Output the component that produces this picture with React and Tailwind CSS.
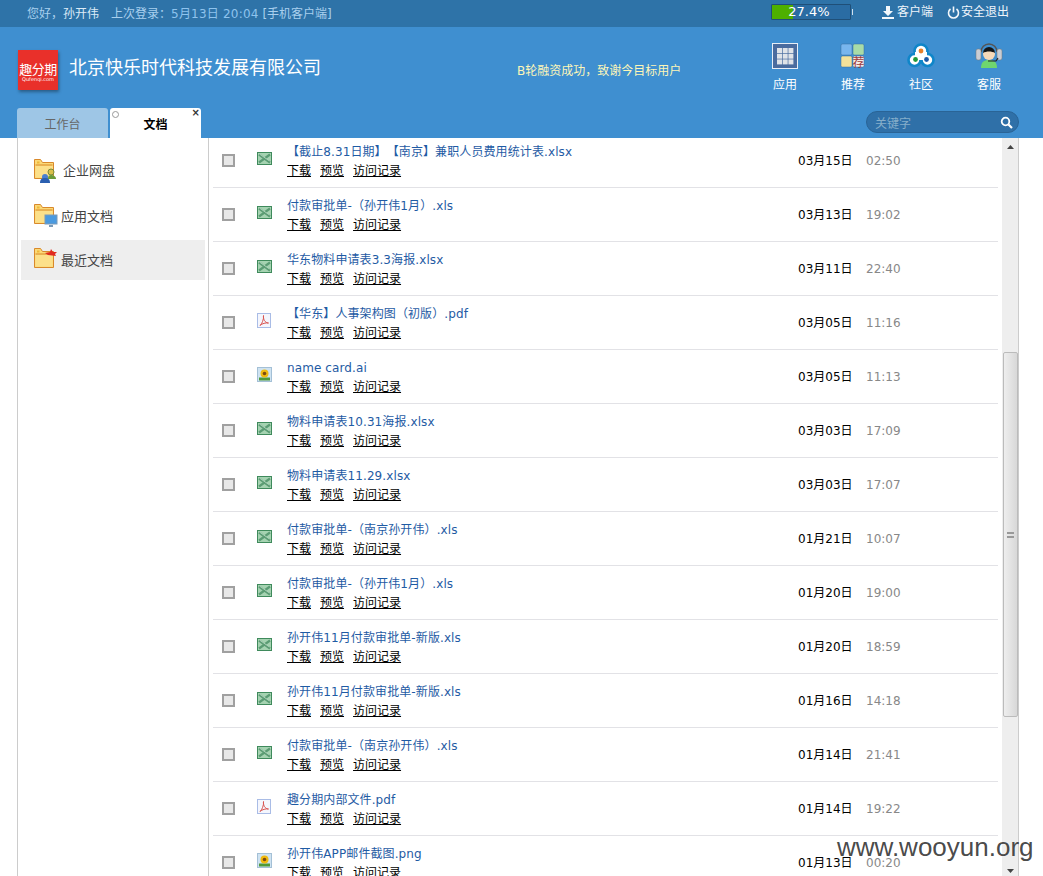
import React from "react";

const FONT = "font-['DejaVu_Sans','Noto_Sans_CJK_SC',sans-serif]";

const files = [
  { name: "【截止8.31日期】【南京】兼职人员费用统计表.xlsx", type: "xls", date: "03月15日", time: "02:50" },
  { name: "付款审批单-（孙开伟1月）.xls", type: "xls", date: "03月13日", time: "19:02" },
  { name: "华东物料申请表3.3海报.xlsx", type: "xls", date: "03月11日", time: "22:40" },
  { name: "【华东】人事架构图（初版）.pdf", type: "pdf", date: "03月05日", time: "11:16" },
  { name: "name card.ai", type: "img", date: "03月05日", time: "11:13" },
  { name: "物料申请表10.31海报.xlsx", type: "xls", date: "03月03日", time: "17:09" },
  { name: "物料申请表11.29.xlsx", type: "xls", date: "03月03日", time: "17:07" },
  { name: "付款审批单-（南京孙开伟）.xls", type: "xls", date: "01月21日", time: "10:07" },
  { name: "付款审批单-（孙开伟1月）.xls", type: "xls", date: "01月20日", time: "19:00" },
  { name: "孙开伟11月付款审批单-新版.xls", type: "xls", date: "01月20日", time: "18:59" },
  { name: "孙开伟11月付款审批单-新版.xls", type: "xls", date: "01月16日", time: "14:18" },
  { name: "付款审批单-（南京孙开伟）.xls", type: "xls", date: "01月14日", time: "21:41" },
  { name: "趣分期内部文件.pdf", type: "pdf", date: "01月14日", time: "19:22" },
  { name: "孙开伟APP邮件截图.png", type: "img", date: "01月13日", time: "00:20" },
];

function FileIcon({ type }) {
  if (type === "xls") {
    return (
      <svg width="15" height="15" viewBox="0 0 15 15" className="block">
        <rect x="0.5" y="1.5" width="14" height="12" fill="#a5d3b1" stroke="#3f8a5c" />
        <path d="M2 3.500l11 8M13 3.500l-11 8" stroke="#5b9c74" strokeWidth="2.200" />
        <path d="M2.500 3l10 7" stroke="#e2f2e6" strokeWidth="0.600" />
      </svg>
    );
  }
  if (type === "pdf") {
    return (
      <svg width="15" height="15" viewBox="0 0 15 15" className="block">
        <rect x="0.5" y="0.5" width="13" height="14" fill="#f4f6fd" stroke="#a9bce6" />
        <path d="M3 12.500C5 11 7 6 6.500 2.500 6 6 8 10 11.500 10 9 9.500 5 10.500 3 12.500z" fill="none" stroke="#d9534f" strokeWidth="1" />
      </svg>
    );
  }
  return (
    <svg width="15" height="15" viewBox="0 0 15 15" className="block">
      <rect x="0.5" y="0.5" width="14" height="14" fill="#cfe3f2" stroke="#a4c0d6" />
      <rect x="2" y="10.500" width="11" height="3" fill="#4f9a3a" />
      <circle cx="7.500" cy="6.500" r="4" fill="#f0b90f" />
      <circle cx="7.500" cy="6.500" r="1.800" fill="#7a4a10" />
    </svg>
  );
}

function FolderIcon({ children }) {
  return (
    <svg width="24" height="24" viewBox="0 0 24 24">
      <path d="M0.500 0.500h6l2 3h11v16h-19z" fill="#fbd977" stroke="#d9892b" />
      <path d="M1.500 7h17v11.500h-17z" fill="#fce08a" />
      <path d="M1.500 6h17" stroke="#d9892b" strokeWidth="1" />
      <rect x="3" y="2.500" width="2.500" height="2" fill="#f0b93a" />
      {children}
    </svg>
  );
}

function AppsIcon() {
  return (
    <svg width="26" height="26" viewBox="0 0 26 26">
      <rect x="0.500" y="0.500" width="25" height="25" fill="#4a6c9f" stroke="#e8eef6" />
      <g fill="#dfe3e8">
        <rect x="5" y="5" width="5" height="5" />
        <rect x="10.700" y="5" width="5" height="5" />
        <rect x="16.400" y="5" width="5" height="5" />
        <rect x="5" y="10.700" width="5" height="5" />
        <rect x="10.700" y="10.700" width="5" height="5" />
        <rect x="16.400" y="10.700" width="5" height="5" />
        <rect x="5" y="16.400" width="5" height="5" />
        <rect x="10.700" y="16.400" width="5" height="5" />
        <rect x="16.400" y="16.400" width="5" height="5" />
      </g>
    </svg>
  );
}

function RecommendIcon() {
  return (
    <svg width="26" height="26" viewBox="0 0 26 26">
      <rect x="1" y="1" width="11" height="11" rx="1.500" fill="#78b6ee" stroke="#3a6f9e" strokeWidth="0.500" />
      <rect x="13" y="1" width="11" height="11" rx="1.500" fill="#a8dca8" stroke="#3a6f9e" strokeWidth="0.500" />
      <rect x="1" y="13" width="11" height="11" rx="1.500" fill="#f3e29a" stroke="#3a6f9e" strokeWidth="0.500" />
      <rect x="13" y="13" width="11" height="11" rx="1.500" fill="#f5ece6" stroke="#3a6f9e" strokeWidth="0.500" />
      <text x="12.500" y="24" fontSize="12" fill="#9c3b3b" fontFamily="Noto Sans CJK SC">荐</text>
    </svg>
  );
}

function CommunityIcon() {
  return (
    <svg width="28" height="26" viewBox="0 0 28 26">
      <g fill="#fff" stroke="#0f86c9" strokeWidth="2.600">
        <circle cx="14" cy="8" r="6.500" />
        <circle cx="7.500" cy="17" r="6" />
        <circle cx="20.500" cy="17" r="6" />
      </g>
      <path d="M8 9h12v8H8z" fill="#fff" />
      <circle cx="14" cy="8" r="2.400" fill="#e8802a" />
      <circle cx="8.500" cy="16.500" r="2.400" fill="#1f9a3a" />
      <circle cx="19.500" cy="16.500" r="2.400" fill="#1c5aa8" />
    </svg>
  );
}

function ServiceIcon() {
  return (
    <svg width="28" height="28" viewBox="0 0 28 28">
      <path d="M6 10a8 8 0 0 1 16 0" fill="none" stroke="#555" strokeWidth="1.500" />
      <rect x="1" y="7" width="5" height="11" rx="2" fill="#c9cdd4" stroke="#777" strokeWidth="0.500" />
      <rect x="22" y="7" width="5" height="11" rx="2" fill="#c9cdd4" stroke="#777" strokeWidth="0.500" />
      <path d="M6 26c0-6 3-8 8-8s8 2 8 8z" fill="#6fd66f" />
      <circle cx="14" cy="12" r="6" fill="#f6d9b8" />
      <path d="M8 11a6 6 0 0 1 12 0c-3-2-9-2-12 0z" fill="#151515" />
      <path d="M13 19h8l2-3" fill="none" stroke="#222" strokeWidth="1.200" />
    </svg>
  );
}

function TopBar() {
  return (
    <div className="flex h-[27px] items-center justify-between bg-[#2e73a8] pl-[27px] pr-[35px] text-xs text-[#a9d0ee]">
      <div className="flex items-center">
        <span>您好，<span className="text-[#dcebf7]">孙开伟</span></span>
        <span className="ml-3">上次登录：<span className="tracking-[0.2px] text-[#8ec3ee]">5月13日 20:04</span> [手机客户端]</span>
      </div>
      <div className="flex items-center text-[#eef5fb]">
        <div className="relative mb-[3px] mr-[31px] flex h-[16px] w-[80px] rounded-[1px] border border-[#1f4f78] bg-[#2a6ca3]">
          <div className="h-full w-[21px] bg-[#4eb000]" />
          <span className="absolute inset-x-0 top-0 pr-[4px] text-center text-[13px] leading-[14px] text-white">27.4%</span>
          <span className="absolute right-[-3px] top-[4px] h-[6px] w-[1px] bg-[#cfe0ee]" />
        </div>
        <svg width="12" height="13" viewBox="0 0 12 13" className="mr-[3px] mb-[2px]">
          <path d="M4 0h4v5h3L6 10 1 5h3zM0 11h12v2H0z" fill="#f2f7fb" />
        </svg>
        <span className="mb-[3px]">客户端</span>
        <svg width="13" height="13" viewBox="0 0 13 13" className="ml-[14px] mr-[1px] mb-[2px]">
          <path d="M3.500 3a5 5 0 1 0 6 0" fill="none" stroke="#f2f7fb" strokeWidth="1.600" />
          <path d="M6.500 0.500v6" stroke="#f2f7fb" strokeWidth="1.600" />
        </svg>
        <span className="mb-[3px] mr-[-1px]">安全退出</span>
      </div>
    </div>
  );
}

function Header() {
  const navs = [
    { label: "应用", icon: <AppsIcon /> },
    { label: "推荐", icon: <RecommendIcon /> },
    { label: "社区", icon: <CommunityIcon /> },
    { label: "客服", icon: <ServiceIcon /> },
  ];
  return (
    <div className="h-[111px] bg-[#3f8fd0]">
      <div className="flex h-[81px]">
        <div className="ml-[18px] mt-[23px] flex h-10 w-10 flex-col items-center justify-center bg-[#e9302a] text-white shadow-[1px_2px_3px_rgba(0,0,0,0.35)]">
          <span className="mt-1 text-[13px] leading-[13px] tracking-[-0.5px] whitespace-nowrap">趣分期</span>
          <span className="text-[5px] leading-[6px]">Qufenqi.com</span>
        </div>
        <div className="ml-[11px] mt-[31px] w-[448px] text-[18px] leading-5 text-white">北京快乐时代科技发展有限公司</div>
        <div className="mt-[36px] w-[234px] text-xs leading-4 text-[#fdf6b8]">B轮融资成功，致谢今目标用户</div>
        <div className="flex">
          {navs.map((n) => (
            <div key={n.label} className="flex w-[68px] flex-col items-center pt-[15px] text-xs text-white">
              <div className="flex h-[28px] items-center justify-center">{n.icon}</div>
              <span className="mt-[7px] leading-4">{n.label}</span>
            </div>
          ))}
        </div>
      </div>
      <div className="flex h-[30px] items-start pl-[17px]">
        <div className="flex h-[30px] w-[91px] items-center justify-center rounded-t-[3px] bg-[#9ec6e6] pt-1 text-xs text-[#666]">工作台</div>
        <div className="relative ml-[2px] flex h-[30px] w-[91px] items-center justify-center rounded-t-[3px] bg-white pt-1 text-xs font-bold text-black">
          文档
          <span className="absolute left-[2px] top-[3px] h-[7px] w-[7px] rounded-full border border-[#999]" />
          <span className="absolute right-[1px] top-[-1px] text-[10px] leading-3 font-bold text-[#333]">×</span>
        </div>
        <div className="ml-[665px] mt-[3px] flex h-[22px] w-[153px] items-center justify-between rounded-full border border-[#2a6496] bg-[#2f70a8] pl-2 pr-[5px] pt-[3px] text-xs text-[#86aeca]">
          <span>关键字</span>
          <svg width="13" height="13" viewBox="0 0 13 13" className="mb-[3px]">
            <circle cx="5.500" cy="5.500" r="3.800" fill="none" stroke="#fff" strokeWidth="1.800" />
            <path d="M8.500 8.500l3.500 3.500" stroke="#fff" strokeWidth="2.200" />
          </svg>
        </div>
      </div>
    </div>
  );
}

function Sidebar() {
  return (
    <div className="h-full w-[192px] shrink-0 border-x border-[#ccc] px-[3px] pt-[13px] text-[13px] text-[#444]">
      <div className="flex h-[40px] items-center pl-[13px]">
        <FolderIcon>
          <circle cx="17" cy="13" r="3" fill="#d9c04a" stroke="#7a8a3a" />
          <circle cx="11" cy="18" r="3" fill="#4a7fd0" />
          <path d="M6 24c0-4 2-5 5-5s5 1 5 5z" fill="#2a5fb0" />
          <path d="M14 20c0-3 1-4 3-4s5 1 5 4z" fill="#6a9a3a" />
        </FolderIcon>
        <span className="ml-[5px]">企业网盘</span>
      </div>
      <div className="mt-[5px] flex h-[40px] items-center pl-[13px]">
        <FolderIcon>
          <rect x="11" y="11" width="12" height="9" fill="#4a9ae0" stroke="#7a9ab8" />
          <path d="M15 22h4" stroke="#7a9ab8" strokeWidth="2" />
        </FolderIcon>
        <span className="ml-[3px] pt-[1px]">应用文档</span>
      </div>
      <div className="mt-[4px] flex h-[40px] items-center bg-[#eee] pl-[13px]">
        <FolderIcon>
          <path d="M11 5l5-1 1-3 2 3 4 0-2 2 1 2-8-1z" fill="#e02a20" />
        </FolderIcon>
        <span className="ml-[3px] pt-[2px]">最近文档</span>
      </div>
    </div>
  );
}

function FileRow({ file }) {
  return (
    <div className="flex h-[54px] items-start border-b border-[#e2e2e6] text-xs">
      <span className="ml-[9px] mt-[20px] h-[13px] w-[13px] shrink-0 border-2 border-[#a0a0a0] bg-[#e8e8e8]" />
      <span className="ml-[22px] mt-[17px] shrink-0"><FileIcon type={file.type} /></span>
      <div className="ml-[15px] mt-[10px] w-[511px] shrink-0">
        <div className="whitespace-nowrap leading-4 tracking-[0.1px] text-[#1f5ba4] [text-spacing-trim:space-all]">{file.name}</div>
        <div className="mt-[3px] flex gap-[9px] leading-4 text-black">
          <span className="underline">下载</span>
          <span className="underline">预览</span>
          <span className="underline">访问记录</span>
        </div>
      </div>
      <span className="mt-[19px] w-[68px] shrink-0 leading-4 text-black">{file.date}</span>
      <span className="mt-[19px] leading-4 text-[#888]">{file.time}</span>
    </div>
  );
}

function Scrollbar() {
  return (
    <div className="flex h-full w-[17px] shrink-0 flex-col items-center border-r border-[#ccc] bg-[#eee]">
      <svg width="7" height="4" viewBox="0 0 7 4" className="mt-[7px] shrink-0">
        <path d="M3.500 0L7 4H0z" fill="#444" />
      </svg>
      <div className="mt-[203px] flex h-[365px] w-[15px] shrink-0 items-center justify-center rounded-[2px] border border-[#bbb] bg-[linear-gradient(90deg,#eee,#d8d8d8)]">
        <span className="h-[6px] w-[7px] border-y-2 border-[#999]" />
      </div>
      <svg width="7" height="4" viewBox="0 0 7 4" className="mt-[152px] shrink-0">
        <path d="M0 0h7L3.500 4z" fill="#444" />
      </svg>
    </div>
  );
}

export default function App() {
  return (
    <div className={`relative flex h-[876px] w-[1043px] flex-col overflow-hidden bg-white ${FONT}`}>
      <TopBar />
      <Header />
      <div className="flex min-h-0 flex-1 pl-[17px]">
        <Sidebar />
        <div className="h-full w-[793px] shrink-0 overflow-hidden pl-[4px] pr-[4px]">
          <div className="-mt-[4px]">
            {files.map((f, i) => (
              <FileRow key={i} file={f} />
            ))}
          </div>
        </div>
        <Scrollbar />
      </div>
      <span className="absolute left-[837px] top-[831px] font-['Liberation_Sans',sans-serif] text-[26px] leading-[32px] text-[#333]/90">www.wooyun.org</span>
    </div>
  );
}
